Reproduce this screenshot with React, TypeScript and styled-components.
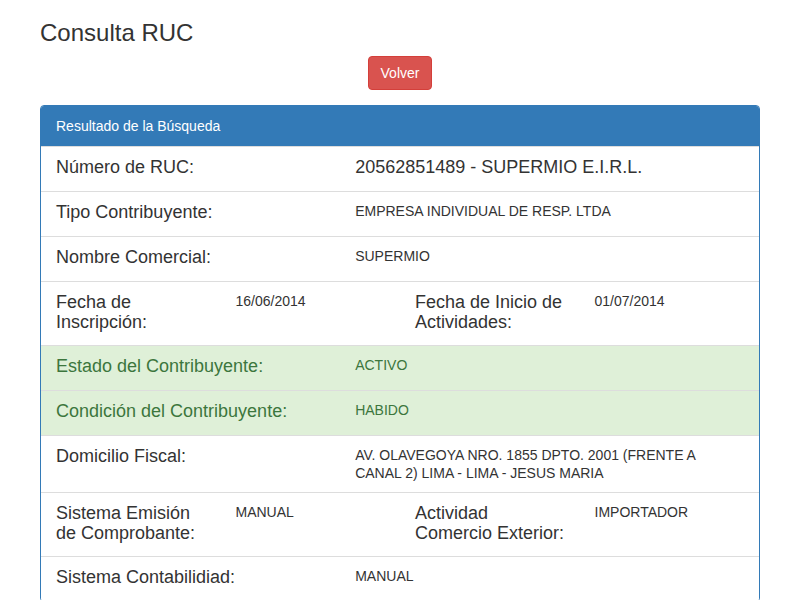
import styled, { createGlobalStyle } from "styled-components";

const GlobalStyle = createGlobalStyle`
  html {
    overflow: hidden;
  }
  body {
    margin: 0;
    background: #ffffff;
    font-family: "Liberation Sans", Arial, Helvetica, sans-serif;
    font-size: 14px;
    line-height: 1.42857;
    color: #333333;
  }
  * {
    box-sizing: border-box;
  }
`;

type Field = { label: string; value: string };

type Item =
  | { kind: "single"; field: Field; big?: boolean; success?: boolean }
  | { kind: "double"; left: Field; right: Field };

const items: Item[] = [
  {
    kind: "single",
    field: { label: "Número de RUC:", value: "20562851489 - SUPERMIO E.I.R.L." },
    big: true,
  },
  {
    kind: "single",
    field: { label: "Tipo Contribuyente:", value: "EMPRESA INDIVIDUAL DE RESP. LTDA" },
  },
  { kind: "single", field: { label: "Nombre Comercial:", value: "SUPERMIO" } },
  {
    kind: "double",
    left: { label: "Fecha de Inscripción:", value: "16/06/2014" },
    right: { label: "Fecha de Inicio de Actividades:", value: "01/07/2014" },
  },
  {
    kind: "single",
    field: { label: "Estado del Contribuyente:", value: "ACTIVO" },
    success: true,
  },
  {
    kind: "single",
    field: { label: "Condición del Contribuyente:", value: "HABIDO" },
    success: true,
  },
  {
    kind: "single",
    field: {
      label: "Domicilio Fiscal:",
      value: "AV. OLAVEGOYA NRO. 1855 DPTO. 2001 (FRENTE A CANAL 2) LIMA - LIMA - JESUS MARIA",
    },
  },
  {
    kind: "double",
    left: { label: "Sistema Emisión de Comprobante:", value: "MANUAL" },
    right: { label: "Actividad Comercio Exterior:", value: "IMPORTADOR" },
  },
  { kind: "single", field: { label: "Sistema Contabilidiad:", value: "MANUAL" } },
];

const App = () => {
  return (
    <>
      <GlobalStyle />
      <Container>
        <Title>Consulta RUC</Title>
        <Actions>
          <DangerButton type="button">Volver</DangerButton>
        </Actions>

        <Panel>
          <PanelHeading>Resultado de la Búsqueda</PanelHeading>
          <ListGroup>
            {items.map((item, i) => (
              <ListItem key={i} $success={item.kind === "single" && !!item.success}>
                <Row>
                  {item.kind === "single" ? (
                    <>
                      <Col $span={5}>
                        <Label>{item.field.label}</Label>
                      </Col>
                      <Col $span={7}>
                        {item.big ? (
                          <Label>{item.field.value}</Label>
                        ) : (
                          <Value>{item.field.value}</Value>
                        )}
                      </Col>
                    </>
                  ) : (
                    <>
                      <Col $span={3}>
                        <Label>{item.left.label}</Label>
                      </Col>
                      <Col $span={3}>
                        <Value>{item.left.value}</Value>
                      </Col>
                      <Col $span={3}>
                        <Label>{item.right.label}</Label>
                      </Col>
                      <Col $span={3}>
                        <Value>{item.right.value}</Value>
                      </Col>
                    </>
                  )}
                </Row>
              </ListItem>
            ))}
          </ListGroup>
        </Panel>
      </Container>
    </>
  );
};

export default App;

const Container = styled.div`
  width: 750px;
  margin: 0 auto;
  padding: 0 15px;
`;

const Title = styled.h3`
  margin: 20px 0 10px;
  font-size: 24px;
  font-weight: 500;
  line-height: 1.1;
  color: #333333;
`;

const Actions = styled.div`
  display: flex;
  justify-content: center;
  margin-bottom: 15px;
`;

const DangerButton = styled.button`
  font-family: "Liberation Sans", Arial, sans-serif;
  font-size: 14px;
  line-height: 20px;
  padding: 6px 12px;
  color: #ffffff;
  background: #d9534f;
  border: 1px solid #d43f3a;
  border-radius: 4px;
  cursor: pointer;
`;

const Panel = styled.div`
  border: 1px solid #337ab7;
  border-radius: 4px;
  background: #ffffff;
  overflow: hidden;
`;

const PanelHeading = styled.div`
  padding: 10px 15px;
  font-size: 14px;
  line-height: 20px;
  color: #ffffff;
  background: #337ab7;
`;

const ListGroup = styled.div`
  display: flex;
  flex-direction: column;
`;

const ListItem = styled.div<{ $success: boolean }>`
  padding: 10px 15px;
  border-top: 1px solid #dddddd;
  background: ${(p) => (p.$success ? "#dff0d8" : "#ffffff")};
  color: ${(p) => (p.$success ? "#3c763d" : "#333333")};
`;

const Row = styled.div`
  display: grid;
  grid-template-columns: repeat(12, 1fr);
  margin: 0 -15px;
  min-height: 24px;
`;

const Col = styled.div<{ $span: number }>`
  grid-column: span ${(p) => p.$span};
  padding: 0 15px;
  min-width: 0;
`;

const Label = styled.h4`
  margin: 0 0 3px;
  font-size: 18px;
  font-weight: 500;
  line-height: 20px;
`;

const Value = styled.p`
  margin: 0;
  font-size: 14px;
  line-height: 18px;
`;
